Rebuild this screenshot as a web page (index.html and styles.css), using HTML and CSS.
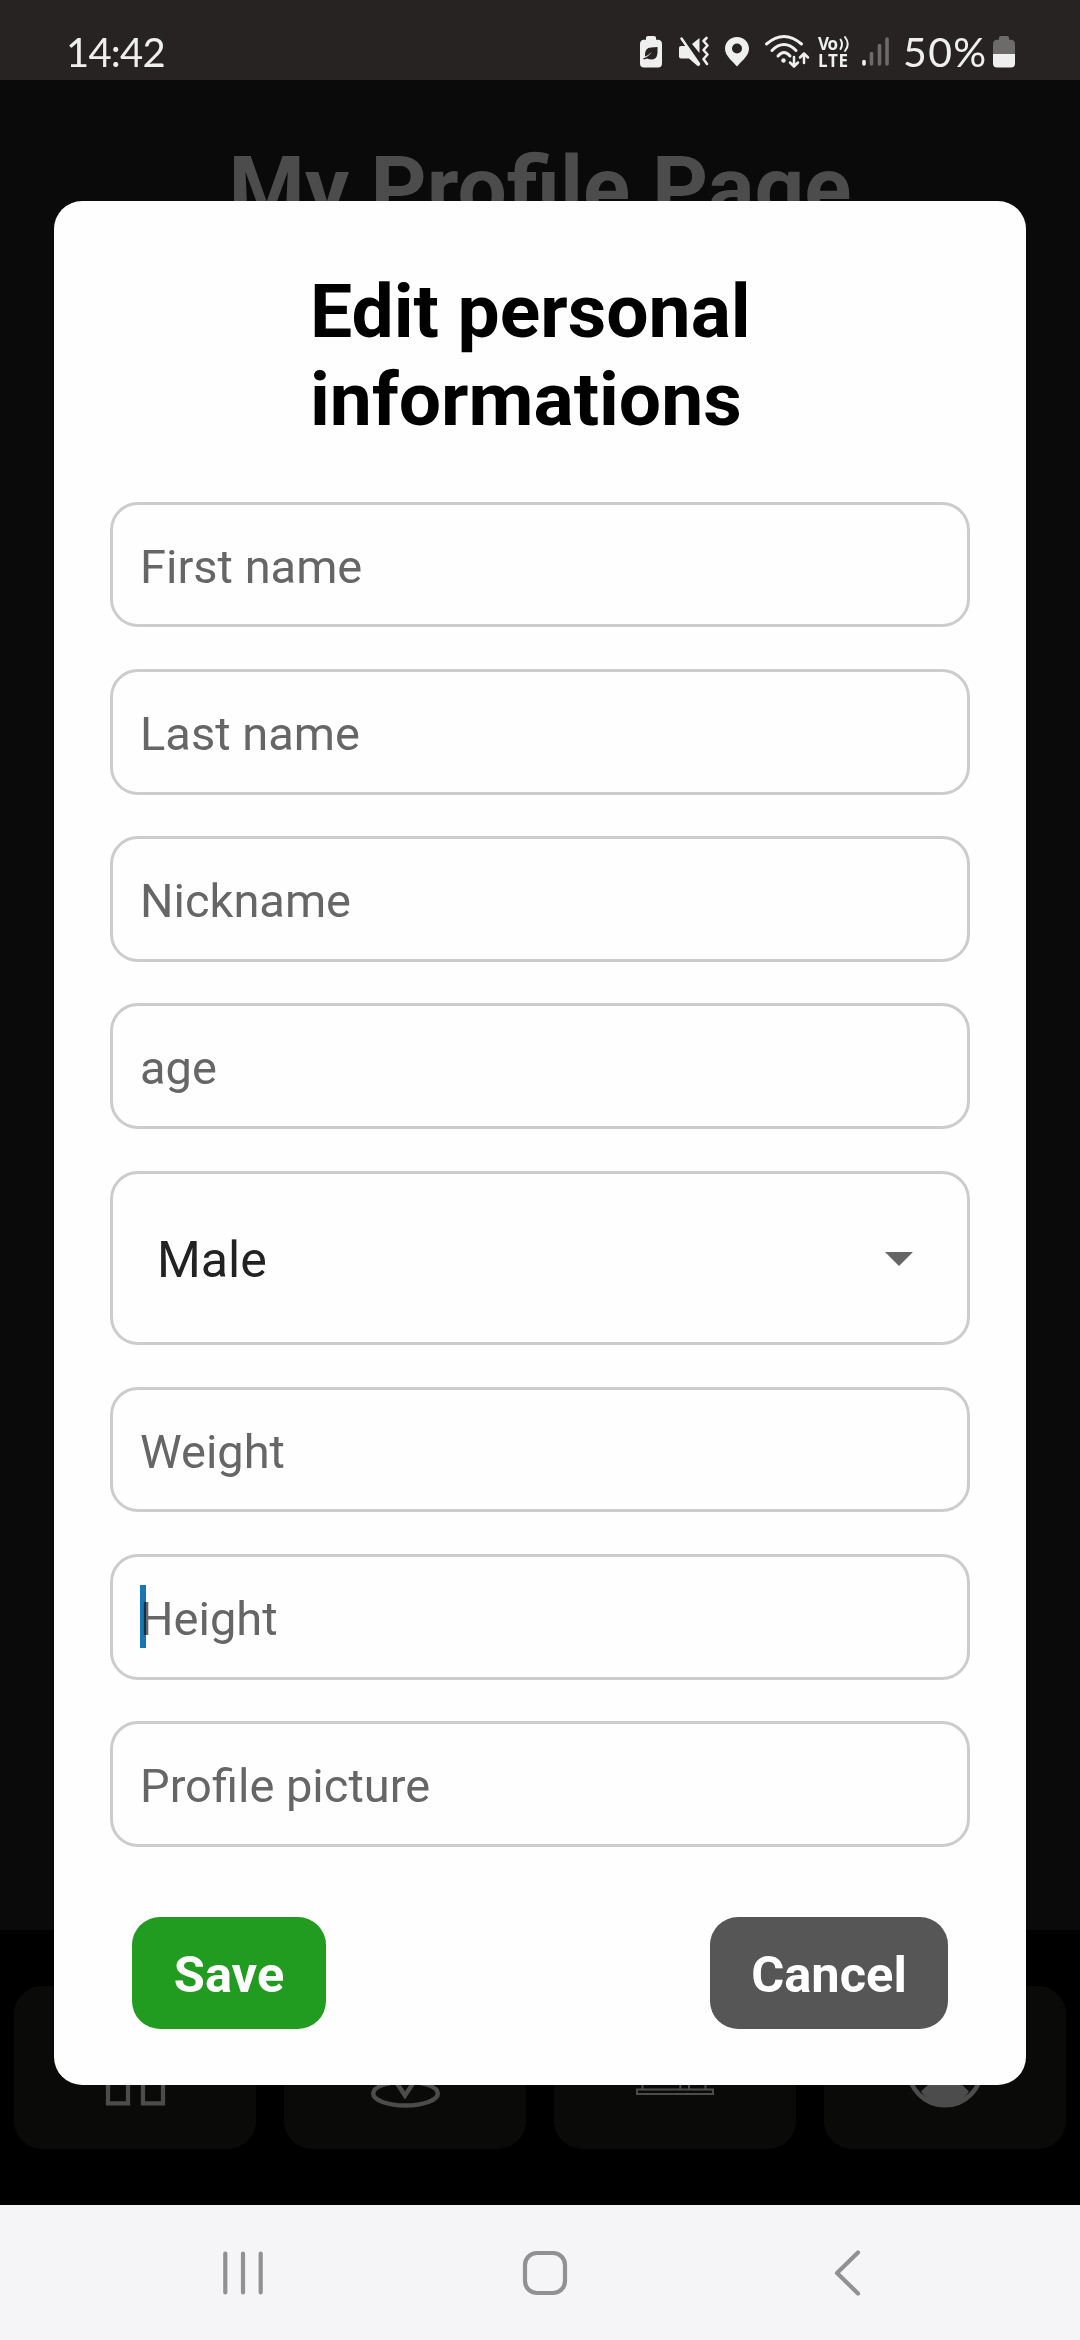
FILE: index.html
```
<!DOCTYPE html>
<html lang="en">
<head>
<meta charset="utf-8">
<title>My Profile Page</title>
<link rel="stylesheet" href="styles.css">
</head>
<body>
<div class="screen">
  <header class="status">
    <span class="clock">14:42</span>
    <div class="status-right">
      <svg class="status-icons" width="263" height="50" viewBox="0 0 263 50" fill="none" stroke-linecap="round" stroke-linejoin="round">
        <path fill="#efefef" d="M6 13V12.500Q6 11 8 11H14Q16 11 16 12.500V14.800H18Q22 15 22 19V38.500Q22 42.500 18 42.500H4Q0 42.500 0 38.500V19Q0 15 4 14.800H6z"/>
        <path fill="#272322" d="M17.500 22V28Q17 34 12 34.500Q9 34.500 7 33.500L4 34.500 3 33.500Q8 32 12 27Q7 31 5 31.500Q4.500 22.500 11 22.500Z"/>
        <g transform="translate(39 11)">
          <path fill="#efefef" d="M0 12Q0 10 2 10H8.500L20.500 27V29Q20.500 31 18 29.500L10 22.500H2Q0 22.500 0 20.500zM13 8L20.500 2V17z"/>
          <path stroke="#efefef" stroke-width="2.500" d="M2.500 2.500L20 28"/>
          <path stroke="#efefef" stroke-width="2.600" d="M27.500 2L24.500 5L28.500 9.500L24.500 14L28.500 18.500L24.500 23L28 28"/>
        </g>
        <path fill="#efefef" fill-rule="evenodd" d="M97 12C104 12 109 17 109 24C109 31 100 37.500 97 41.500C94 37.500 85 31 85 24C85 17 90 12 97 12zM97 18.500a5 5 0 1 0 0 10a5 5 0 1 0 0-10z"/>
        <g stroke="#efefef" stroke-width="3">
          <path d="M126.500 19Q144 4 161.500 19M132 25.500Q144 13.500 156 25.500M138 31Q144 24 150 31"/>
          <path stroke-width="2.500" d="M154 32V41M150 37.500L154 41.500L158 37.500M164 38V29M160 32.500L164 28.500L168 32.500"/>
        </g>
        <circle cx="143.500" cy="35.500" r="2.200" fill="#efefef"/>
        <text class="volte" x="178" y="25" textLength="20">Vo</text>
        <text class="volte" x="178" y="42" textLength="30">LTE</text>
        <path stroke="#efefef" stroke-width="2" d="M200.500 14.500Q203.500 19 200.500 24M205 12Q210.500 19 205 26"/>
        <g stroke-width="3.600">
          <path stroke="#efefef" d="M224 36.500V39"/>
          <path stroke="#6d6b6a" d="M231.500 28.500V39M239.500 20.500V39M247 14V39"/>
        </g>
      </svg>
      <span class="percent">50%</span>
      <svg width="22" height="50" viewBox="0 0 22 50">
        <path fill="#6d6b6a" d="M6 14.800V12.500Q6 11 8 11H14Q16 11 16 12.500V14.800H18Q22 15 22 19V29H0V19Q0 15 4 14.800z"/>
        <path fill="#efefef" d="M0 29H22V38.500Q22 42.500 18 42.500H4Q0 42.500 0 38.500z"/>
      </svg>
    </div>
  </header>

  <main class="page">
    <h1 class="page-title">My Profile Page</h1>
  </main>

  <nav class="tabs">
    <a class="tab">
      <svg width="80" height="80" viewBox="0 0 80 80" fill="none" stroke="#4c4c4c" stroke-width="4.300"><path d="M13 36V75.300H33V52H48V75.300H68V36L40 10z"/></svg>
    </a>
    <a class="tab">
      <svg width="80" height="80" viewBox="0 0 80 80" fill="none" stroke="#4c4c4c" stroke-width="4.500"><ellipse cx="40.500" cy="65.500" rx="32.300" ry="12"/><path fill="#0a0a08" d="M40 67.500L22 40A21 21 0 1 1 58 40z"/></svg>
    </a>
    <a class="tab">
      <svg width="80" height="80" viewBox="0 0 80 80" fill="none" stroke="#4c4c4c" stroke-width="2"><path d="M2 61.500H78V66H2zM7.500 61V30H45.300V61M54 61V20H70.500V61"/></svg>
    </a>
    <a class="tab">
      <svg width="80" height="80" viewBox="0 0 80 80"><circle cx="40" cy="40.700" r="36.500" fill="none" stroke="#4c4c4c" stroke-width="4.600"/><path fill="#4c4c4c" d="M16 63.500Q27 51 40 51T64 63.500Q54 78 40 78T16 63.500z"/></svg>
    </a>
  </nav>

  <footer class="sysnav">
    <svg width="1080" height="135" viewBox="0 0 1080 135" fill="none" stroke="#919191" stroke-width="4.200" stroke-linecap="round" stroke-linejoin="round">
      <path d="M225.300 48.500V87.500M243 48.500V87.500M260.700 48.500V87.500"/>
      <rect x="525" y="48" width="40" height="40" rx="12"/>
      <path d="M858 47.500L837 68L858 88.500"/>
    </svg>
  </footer>

  <div class="overlay">
    <form class="modal">
      <h2 class="modal-title">Edit personal<br>informations</h2>
      <div class="field"><span class="hint">First name</span></div>
      <div class="field"><span class="hint">Last name</span></div>
      <div class="field"><span class="hint">Nickname</span></div>
      <div class="field"><span class="hint">age</span></div>
      <div class="field select">
        <span>Male</span>
        <svg width="28" height="14" viewBox="0 0 28 14"><path fill="#666" d="M0 0H28L14 14z"/></svg>
      </div>
      <div class="field"><span class="hint">Weight</span></div>
      <div class="field focused"><span class="hint">Height</span></div>
      <div class="field"><span class="hint">Profile picture</span></div>
      <div class="actions">
        <button type="button" class="btn save">Save</button>
        <button type="button" class="btn cancel">Cancel</button>
      </div>
    </form>
  </div>
</div>
</body>
</html>
```
FILE: styles.css
```
* { box-sizing: border-box; }

body {
  margin: 0;
  font-family: Roboto, "Liberation Sans", sans-serif;
}

.screen {
  position: relative;
  width: 1080px;
  height: 2340px;
  display: flex;
  flex-direction: column;
  overflow: hidden;
  background: #0a0a0a;
}

.status {
  height: 80px;
  flex: none;
  display: flex;
  justify-content: space-between;
  align-items: flex-start;
  padding: 25px 65px 0 66px;
  background: #272322;
  color: #efefef;
  font-family: Lato, Roboto, sans-serif;
  font-size: 40px;
  line-height: 54px;
}

.clock { letter-spacing: -0.800px; }

.status-right { display: flex; }
.status-icons { flex: none; }

.percent {
  width: 90px;
  font-size: 41px;
  letter-spacing: 1.400px;
}

.volte {
  font: 700 17px "Open Sans", sans-serif;
  fill: #efefef;
}

.page { flex: 1; padding-top: 57px; }

.page-title {
  margin: 0;
  text-align: center;
  font-size: 87.300px;
  line-height: 103px;
  font-weight: 700;
  color: #4c4c4c;
}

.tabs {
  flex: none;
  height: 275px;
  display: flex;
  gap: 28px;
  padding: 56px 14px;
  background: #000;
}

.tab {
  flex: 1;
  display: flex;
  align-items: center;
  justify-content: center;
  background: #0a0a08;
  border-radius: 28px;
}

.sysnav {
  flex: none;
  height: 135px;
  background: #f5f5f8;
}

.sysnav svg { display: block; }

.overlay {
  position: absolute;
  inset: 80px 0 135px;
  display: flex;
  align-items: flex-start;
  justify-content: center;
  padding-top: 121px;
}

.modal {
  width: 972px;
  height: 1884px;
  padding: 66px 56px 56px;
  display: flex;
  flex-direction: column;
  gap: 41.600px;
  background: #fefefe;
  border-radius: 28px;
}

.modal-title {
  margin: 0 0 15.600px;
  align-self: center;
  width: 460px;
  height: 177.600px;
  flex: none;
  font-size: 75px;
  line-height: 88px;
  font-weight: 700;
  color: #000;
}

.field {
  flex: none;
  height: 125.600px;
  display: flex;
  align-items: center;
  padding: 3px 27px 0;
  border: 3px solid #ccc;
  border-radius: 28px;
  font-size: 47px;
}

.hint { color: #666; }

.select {
  height: 174.600px;
  justify-content: space-between;
  padding: 3px 54px 0 44px;
  font-size: 50.200px;
  color: #222;
}

.focused { position: relative; }

.focused::before {
  content: "";
  position: absolute;
  left: 27px;
  top: 28px;
  width: 6px;
  height: 63px;
  background: #1976b5;
  mix-blend-mode: multiply;
}

.actions {
  flex: none;
  display: flex;
  justify-content: space-between;
  margin-top: 28.600px;
  padding: 0 22px;
}

.btn {
  height: 112px;
  padding: 3px 0 0;
  border: 0;
  border-radius: 28px;
  font: 700 50.600px Roboto, sans-serif;
  color: #fff;
}

.save { width: 194px; background: #219b20; }
.cancel { width: 238px; background: #565656; }
```
